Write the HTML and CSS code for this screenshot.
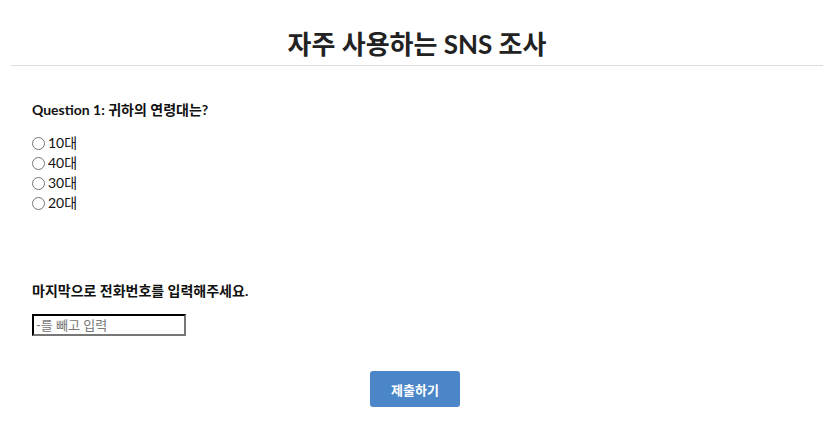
FILE: index.html
```html
<!DOCTYPE html>
<html lang="ko">
<head>
<meta charset="utf-8">
<link rel="stylesheet" href="styles.css">
</head>
<body>
<header class="header">
  <h1 class="title">자주 사용하는 SNS 조사</h1>
</header>
<main class="form">
  <section class="question">
    <h2 class="q-title">Question 1: 귀하의 연령대는?</h2>
    <div class="options">
      <label class="option"><input type="radio" name="age">10대</label>
      <label class="option"><input type="radio" name="age">40대</label>
      <label class="option"><input type="radio" name="age">30대</label>
      <label class="option"><input type="radio" name="age">20대</label>
    </div>
  </section>
  <section class="question last">
    <h2 class="q-title">마지막으로 전화번호를 입력해주세요.</h2>
    <input class="phone" type="text" placeholder="-를 빼고 입력">
  </section>
  <div class="actions">
    <button class="submit" type="button">제출하기</button>
  </div>
</main>
</body>
</html>
```
FILE: styles.css
```css
html, body {
  margin: 0;
  padding: 0;
  background: #fff;
}
body {
  font-family: Lato, "Noto Sans CJK KR", sans-serif;
  color: #111;
}
.header {
  margin: 0 6px 0 11px;
  border-bottom: 1px solid #dcdcdc;
  padding-top: 28px;
  padding-bottom: 4px;
}
.title {
  margin: 0;
  text-align: center;
  font-size: 26px;
  font-weight: 700;
  line-height: 33px;
  color: #222;
}
.form {
  padding: 0 32px;
}
.question {
  margin-top: 34px;
}
.q-title {
  margin: 0;
  font-size: 14px;
  font-weight: 700;
  line-height: 20px;
  color: #111;
}
.options {
  margin-top: 13px;
  display: flex;
  flex-direction: column;
}
.option {
  display: flex;
  align-items: center;
  height: 20px;
  font-size: 14px;
  line-height: 20px;
}
.option input {
  margin: 0 3px 0 0;
  width: 13px;
  height: 13px;
}
.question.last {
  margin-top: 68px;
}
.phone {
  display: block;
  margin-top: 13px;
  box-sizing: border-box;
  width: 154px;
  height: 22px;
  padding: 0 2px;
  border: 2px inset #767676;
  border-top-color: #1a1a1a;
  border-left-color: #1a1a1a;
  border-right-color: #777;
  border-bottom-color: #777;
  font-family: Lato, "Noto Sans CJK KR", sans-serif;
  font-size: 13px;
}
.phone::placeholder {
  color: #777;
}
.actions {
  display: flex;
  justify-content: center;
  margin-top: 35px;
  padding-left: 1px;
}
.submit {
  width: 90px;
  height: 36px;
  border: none;
  border-radius: 3px;
  background: #4a86c8;
  color: #fff;
  font-family: Lato, "Noto Sans CJK KR", sans-serif;
  font-size: 13px;
  font-weight: 700;
}
```
